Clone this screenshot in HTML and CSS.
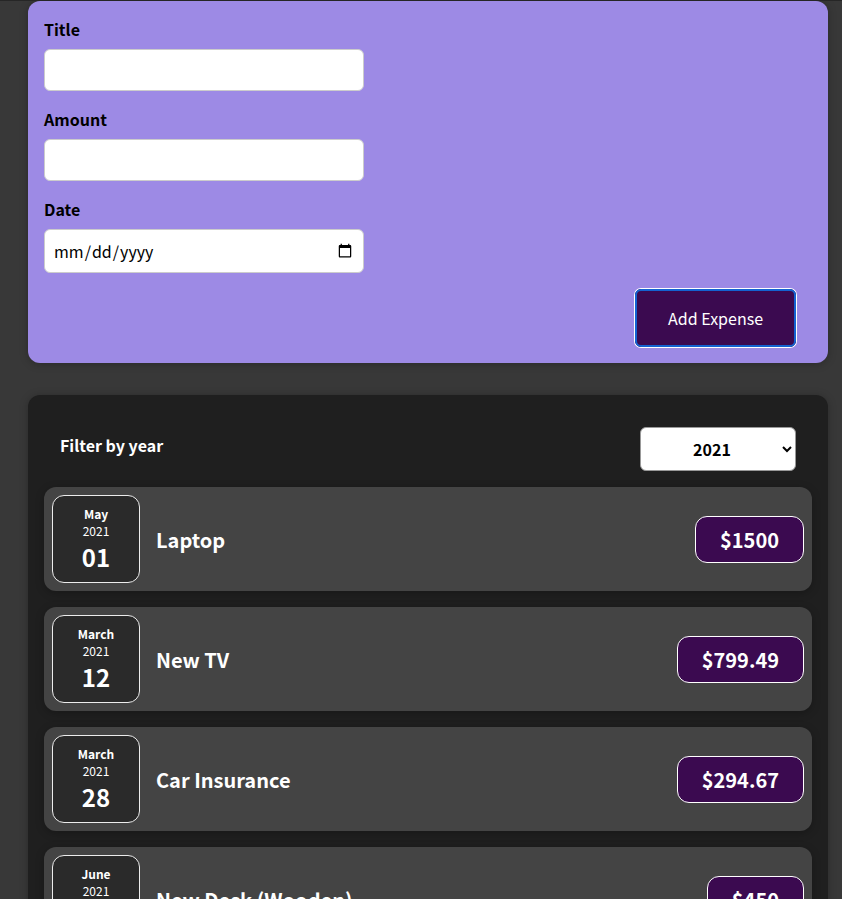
FILE: index.html
```html
<!DOCTYPE html>
<html lang="en">
<head>
<meta charset="utf-8">
<title>Expenses</title>
<link rel="stylesheet" href="styles.css">
</head>
<body>
<div class="app">
  <div class="new-expense">
    <form>
      <div class="controls">
        <div class="control">
          <label>Title</label>
          <input type="text">
        </div>
        <div class="control">
          <label>Amount</label>
          <input type="number">
        </div>
        <div class="control">
          <label>Date</label>
          <input type="date">
        </div>
      </div>
      <div class="actions">
        <button type="submit" class="add-btn">Add Expense</button>
      </div>
    </form>
  </div>

  <div class="expenses">
    <div class="filter">
      <label>Filter by year</label>
      <select>
        <option>2022</option>
        <option selected>2021</option>
        <option>2020</option>
        <option>2019</option>
      </select>
    </div>

    <div class="item">
      <div class="date">
        <div class="month">May</div>
        <div class="year">2021</div>
        <div class="day">01</div>
      </div>
      <div class="desc">
        <h2>Laptop</h2>
        <div class="price">$1500</div>
      </div>
    </div>

    <div class="item">
      <div class="date">
        <div class="month">March</div>
        <div class="year">2021</div>
        <div class="day">12</div>
      </div>
      <div class="desc">
        <h2>New TV</h2>
        <div class="price">$799.49</div>
      </div>
    </div>

    <div class="item">
      <div class="date">
        <div class="month">March</div>
        <div class="year">2021</div>
        <div class="day">28</div>
      </div>
      <div class="desc">
        <h2>Car Insurance</h2>
        <div class="price">$294.67</div>
      </div>
    </div>

    <div class="item">
      <div class="date">
        <div class="month">June</div>
        <div class="year">2021</div>
        <div class="day">12</div>
      </div>
      <div class="desc">
        <h2>New Desk (Wooden)</h2>
        <div class="price">$450</div>
      </div>
    </div>
  </div>
</div>
</body>
</html>
```

FILE: styles.css
```css
* { box-sizing: border-box; }

html {
  font-family: "Noto Sans CJK JP", "Noto Sans", sans-serif;
}

body {
  margin: 0;
  background-color: #383838;
  border-top: 1px solid #262626;
  overflow: hidden;
}

.app {
  padding-left: 28px;
}

.new-expense {
  background-color: #9d8ae5;
  padding: 1rem;
  margin: 0 0 2rem;
  width: 800px;
  border-radius: 12px;
  box-shadow: 0 1px 8px rgba(0, 0, 0, 0.25);
}

.controls {
  display: flex;
  flex-direction: column;
  gap: 1rem;
  margin-bottom: 1rem;
}

.control label {
  display: block;
  font-weight: bold;
  margin-bottom: 0.5rem;
  color: #000;
}

.control input {
  font: inherit;
  padding: 0.5rem;
  border-radius: 6px;
  border: 1px solid #ccc;
  width: 20rem;
  background: #fff;
}

.actions {
  text-align: right;
}

.add-btn {
  font: inherit;
  cursor: pointer;
  padding: 1rem 2rem;
  border: 1px solid #3b0a50;
  background-color: #3b0a50;
  color: white;
  border-radius: 6px;
  margin-right: 1rem;
  outline: 2px solid #1463d0;
  outline-offset: -2px;
  box-shadow: 0 0 0 1px #ffffff;
}

.expenses {
  padding: 1rem;
  background-color: #1f1f1f;
  margin: 0;
  width: 800px;
  border-radius: 12px;
  box-shadow: 0 1px 8px rgba(0, 0, 0, 0.25);
}

.filter {
  color: white;
  padding: 0 1rem;
  margin: 1rem 0;
  display: flex;
  align-items: center;
  justify-content: space-between;
}

.filter label {
  font-weight: bold;
  margin-bottom: 0.5rem;
}

.filter select {
  font: inherit;
  font-weight: bold;
  padding: 0.5rem 3rem;
  border-radius: 6px;
  border: 1px solid #999;
  background: #fff;
  color: #000;
  width: 156px;
  height: 44px;
  text-align: center;
}

.item {
  display: flex;
  align-items: center;
  padding: 0.5rem;
  margin: 1rem 0;
  border-radius: 12px;
  background-color: #444444;
  box-shadow: 0 2px 8px rgba(0, 0, 0, 0.25);
}

.date {
  display: flex;
  flex-direction: column;
  align-items: center;
  justify-content: center;
  width: 5.5rem;
  height: 5.5rem;
  border: 1px solid #ececec;
  background-color: #2a2a2a;
  color: white;
  border-radius: 12px;
  flex-shrink: 0;
}

.month {
  font-size: 0.75rem;
  font-weight: bold;
}

.year {
  font-size: 0.75rem;
}

.day {
  font-size: 1.5rem;
  font-weight: bold;
}

.desc {
  display: flex;
  align-items: center;
  flex: 1;
}

.desc h2 {
  flex: 1;
  margin: 0 1rem;
  font-size: 1.25rem;
  color: white;
}

.price {
  font-size: 1.25rem;
  font-weight: bold;
  color: white;
  background-color: #3b0a50;
  border: 1px solid white;
  padding: 0.5rem 1.5rem;
  border-radius: 12px;
}
```
